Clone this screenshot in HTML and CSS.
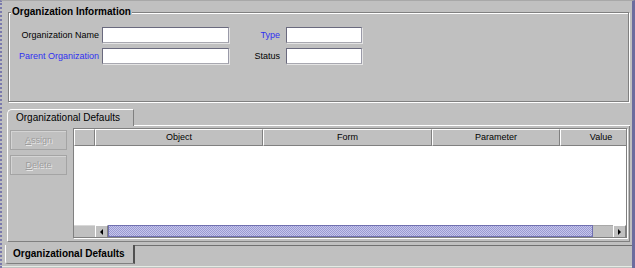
FILE: index.html
```html
<!DOCTYPE html>
<html lang="en">
<head>
    <meta charset="UTF-8">
    <title>Organization</title>
    <link rel="stylesheet" href="styles.css">
</head>
<body>
    <div class="window">
        <div class="group">
            <div class="group-title">Organization Information</div>
            <div class="form-grid">
                <label class="field-label" for="orgName">Organization Name</label>
                <input class="field" type="text" id="orgName">
                <label class="field-label wide link" for="orgType">Type</label>
                <input class="field" type="text" id="orgType">

                <label class="field-label link" for="parentOrg">Parent Organization</label>
                <input class="field" type="text" id="parentOrg">
                <label class="field-label wide" for="orgStatus">Status</label>
                <input class="field" type="text" id="orgStatus">
            </div>
        </div>

        <div class="tabbed">
            <div class="tab-strip">
                <div class="tab">Organizational Defaults</div>
                <div class="tab-fill"></div>
            </div>
            <div class="tab-panel">
                <div class="button-col">
                    <button class="side-button" disabled><u>A</u>ssign</button>
                    <button class="side-button" disabled><u>D</u>elete</button>
                </div>
                <div class="grid-table">
                    <div class="grid-header">
                        <div class="hcell col-corner"></div>
                        <div class="hcell col-object">Object</div>
                        <div class="hcell col-form">Form</div>
                        <div class="hcell col-param">Parameter</div>
                        <div class="hcell col-value">Value</div>
                    </div>
                    <div class="grid-body"></div>
                    <div class="hscroll">
                        <div class="scroll-corner"></div>
                        <div class="scroll-btn"><span class="arrow-left"></span></div>
                        <div class="scroll-thumb"></div>
                        <div class="scroll-track"></div>
                        <div class="scroll-btn"><span class="arrow-right"></span></div>
                    </div>
                </div>
            </div>
        </div>

        <div class="bottom-tabs">
            <div class="btab">Organizational Defaults</div>
            <div class="btab-fill"></div>
        </div>
        <div class="footer-line"></div>
    </div>
</body>
</html>
```
FILE: styles.css
```css
body {
    margin: 0;
    background-color: #c0c0c0;
    font-family: "Liberation Sans", Arial, sans-serif;
    font-size: 9px;
    color: #000;
}

.window {
    width: 635px;
    height: 268px;
    box-sizing: border-box;
    border-top: 1px solid #a8a8a8;
    border-left: 2px dotted #7a7aac;
    border-right: 3px solid #6c6c9e;
    display: flex;
    flex-direction: column;
    overflow: hidden;
}

/* group box */
.group {
    margin: 11px 3px 0 6px;
    height: 90px;
    box-sizing: border-box;
    border: 1px solid #808080;
    box-shadow: inset 1px 1px #fff, 1px 1px #fff;
}

.group-title {
    width: fit-content;
    margin: -7px 0 0 2px;
    padding: 0 1px;
    background-color: #c0c0c0;
    font-size: 10px;
    font-weight: bold;
    line-height: 12px;
}

.form-grid {
    display: grid;
    grid-template-columns: 93px 127px 57px 76px;
    grid-template-rows: 16px 16px;
    row-gap: 5px;
    margin-top: 9px;
}

.field-label {
    align-self: center;
    text-align: right;
    padding-right: 3px;
    white-space: nowrap;
    line-height: 12px;
}

.field-label.wide {
    padding-right: 6px;
}

.link {
    color: #3030f0;
}

.field {
    width: 100%;
    height: 16px;
    box-sizing: border-box;
    margin: 0;
    padding: 0 2px;
    background-color: #fff;
    border: 1px solid;
    border-color: #6a6a7e #9a9aa8 #a8a8b0 #6a6a7e;
    box-shadow: 1px 1px #e4e4e4;
    font-family: inherit;
    font-size: 9px;
}

/* upper tabbed pane */
.tabbed {
    margin: 7px 2px 0 5px;
}

.tab-strip {
    display: flex;
    height: 17px;
}

.tab {
    width: 127px;
    box-sizing: border-box;
    border-top: 1px solid #fff;
    border-left: 1px solid #fff;
    border-right: 1px solid #808080;
    border-top-left-radius: 5px;
    padding-left: 8px;
    font-size: 10px;
    line-height: 16px;
    white-space: nowrap;
}

.tab-fill {
    flex: 1;
    border-bottom: 1px solid #fff;
}

.tab-panel {
    display: flex;
    height: 116px;
    box-sizing: border-box;
    padding-top: 2px;
    border-left: 1px solid #fff;
    border-right: 1px solid #808080;
    border-bottom: 1px solid #808080;
}

.button-col {
    display: flex;
    flex-direction: column;
    gap: 5px;
    padding: 2px 0 0 2px;
}

.side-button {
    width: 57px;
    height: 20px;
    margin: 0;
    padding: 0;
    background-color: #c0c0c0;
    border: 1px solid #a4a4a4;
    box-shadow: inset 1px 1px #d4d4d4;
    color: #9c9c9c;
    text-shadow: 1px 1px #e8e8e8;
    font-family: inherit;
    font-size: 9px;
}

/* table */
.grid-table {
    flex: 1;
    height: 110px;
    box-sizing: border-box;
    margin: 0 2px 0 6px;
    border: 1px solid #808080;
    box-shadow: 1px 1px #fff;
    display: flex;
    flex-direction: column;
    overflow: hidden;
}

.grid-header {
    display: flex;
    height: 17px;
    flex-shrink: 0;
}

.hcell {
    flex-shrink: 0;
    box-sizing: border-box;
    border-top: 1px solid #fff;
    border-left: 1px solid #fff;
    border-right: 1px solid #808080;
    border-bottom: 1px solid #808080;
    text-align: center;
    line-height: 15px;
    white-space: nowrap;
}

.col-corner { width: 21px; }
.col-object { width: 168px; }
.col-form { width: 169px; }
.col-param { width: 128px; }
.col-value { width: 82px; }

.grid-body {
    flex: 1;
    background-color: #fff;
}

.hscroll {
    display: flex;
    height: 12px;
    flex-shrink: 0;
}

.scroll-corner {
    width: 21px;
    border-top: 1px solid #d8d8d8;
    box-sizing: border-box;
}

.scroll-btn {
    width: 13px;
    box-sizing: border-box;
    border-left: 1px solid #fff;
    border-top: 1px solid #fff;
    border-right: 1px solid #808080;
    display: flex;
    align-items: center;
    justify-content: center;
}

.arrow-left {
    border-right: 3px solid #000;
    border-top: 3px solid transparent;
    border-bottom: 3px solid transparent;
}

.arrow-right {
    border-left: 3px solid #000;
    border-top: 3px solid transparent;
    border-bottom: 3px solid transparent;
}

.scroll-thumb {
    width: 485px;
    box-sizing: border-box;
    border: 1px solid #7070b0;
    background: repeating-conic-gradient(#9a9ad2 0 25%, #c6c6ec 0 50%) 0 0 / 2px 2px;
}

.scroll-track {
    flex: 1;
    border-top: 1px solid #a8a8a8;
}

/* bottom tabs */
.bottom-tabs {
    display: flex;
    height: 19px;
    margin-top: 3px;
}

.btab {
    width: 130px;
    box-sizing: border-box;
    margin-left: 3px;
    padding-left: 7px;
    border-left: 1px solid #fff;
    border-right: 2px solid #505050;
    border-bottom: 1px solid #808080;
    border-bottom-left-radius: 3px;
    font-size: 10px;
    font-weight: bold;
    line-height: 18px;
    white-space: nowrap;
}

.btab-fill {
    flex: 1;
    border-top: 1px solid #707070;
}

.footer-line {
    margin-top: auto;
    height: 1px;
    border-top: 1px solid #e4ece4;
}
```
